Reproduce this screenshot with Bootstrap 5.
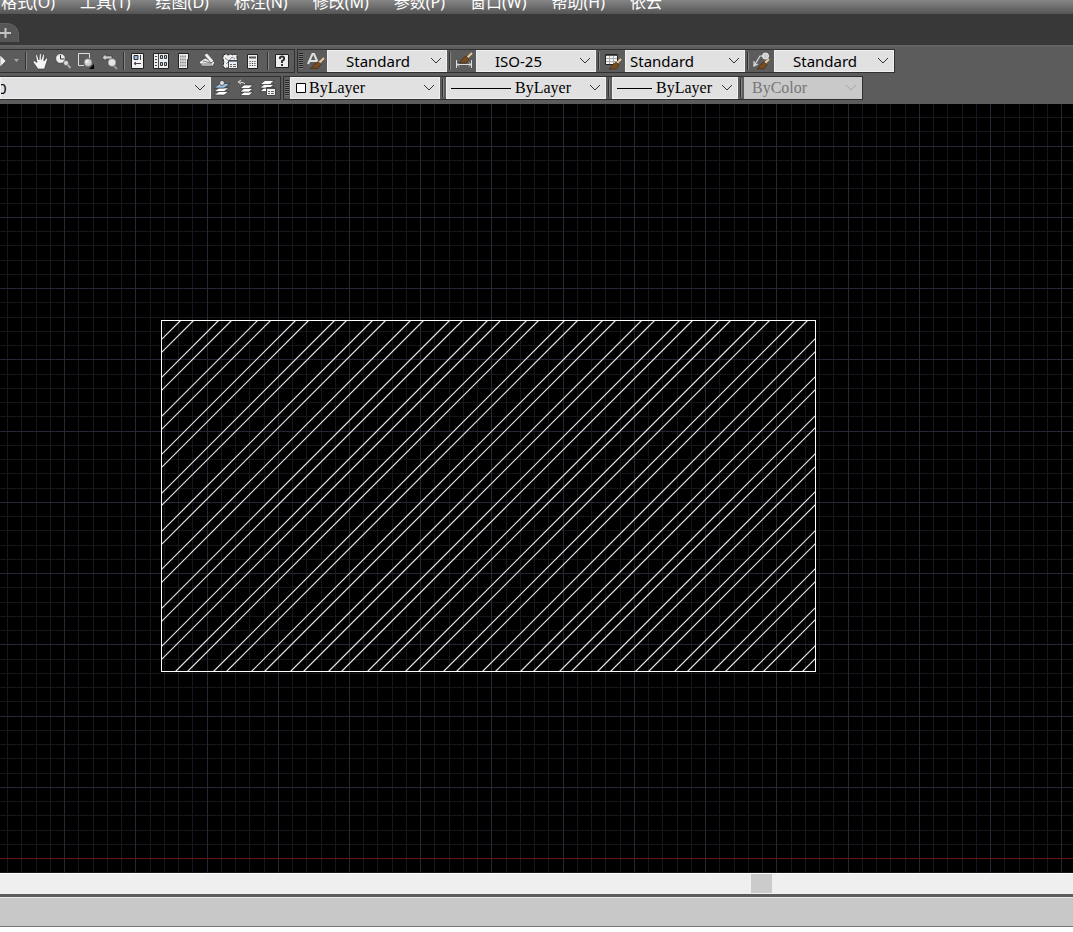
<!DOCTYPE html>
<html lang="zh-CN">
<head>
<meta charset="utf-8">
<meta name="viewport" content="width=device-width, initial-scale=1">
<title>CAD</title>
<link href="https://cdn.jsdelivr.net/npm/bootstrap@5.3.0/dist/css/bootstrap.min.css" rel="stylesheet">
<style>
  body { background: #fff; font-family: "Noto Sans", "Noto Sans CJK SC", sans-serif; }
  .menu-strip { height: 14px; gap: 25px; padding-left: 1px; background: linear-gradient(#868686, #545454); }
  .menu-strip a { color: #fff; font-size: 16px; line-height: 24px; white-space: nowrap; text-decoration: none; }
  .tab-strip { height: 31px; padding-top: 9px; background: #383838; }
  .new-tab { width: 19px; height: 19px; background: #565656; border: 1px solid #606060; border-width: 1px 1px 0 0; border-radius: 0 12px 0 0; }
  .tool-area { background: #5c5c5c; border-top: 2px solid #646464; padding: 2px 0 4px; gap: 3px; }
  .tool-row { gap: 2px; }
  .tool-group { height: 24px; border: 1px solid #303030; background: #5c5c5c; }
  .tool-group.cut { border-left: 0; }
  .tool-btn { width: 23px; height: 22px; padding: 0; border: 0; background: none; display: block; flex: none; }
  .tool-btn svg { display: block; }
  .w-cut { width: 10px; } .w-drop { width: 13px; }
  .split { width: 6px; flex: none; border: 2px solid #5c5c5c; background: linear-gradient(90deg, #303030 1px, #858585 1px); }
  .grip { width: 6px; flex: none; border: 2px solid #5c5c5c; border-width: 3px 1px 3px 1px; background: repeating-linear-gradient(#222 0 1px, #777 1px 2px); }
  .box { position: relative; flex: none; }
  .box select { display: block; width: 100%; height: 22px; padding: 0 20px 0 18px; appearance: none; border: 1px solid #f0f0f0; border-radius: 0; color: #000; line-height: 20px; font-size: 15px;
    background: #e1e1e1 url("data:image/svg+xml,%3Csvg xmlns='http://www.w3.org/2000/svg' width='12' height='8'%3E%3Cpath d='M1 1l5 5 5-5' fill='none' stroke='%23333'/%3E%3C/svg%3E") no-repeat right 4px top 6px; }
  .box select.near { padding-left: 4px; }
  .box select.serif { font: 16px/20px "Liberation Serif", serif; }
  .box select.color { padding-left: 18px; }
  .box select.linetype { padding-left: 68px; }
  .box select.weight { padding-left: 43px; }
  .box select.plot { padding-left: 7px; }
  .box select:disabled { background-color: #c9c9c9; border-color: #c9c9c9; color: #777; opacity: 1;
    background-image: url("data:image/svg+xml,%3Csvg xmlns='http://www.w3.org/2000/svg' width='12' height='8'%3E%3Cpath d='M1 1l5 5 5-5' fill='none' stroke='%23a4a4a4'/%3E%3C/svg%3E"); }
  .sample { position: absolute; left: 0; top: 0; pointer-events: none; }
  .w-118 { width: 118px; } .w-120 { width: 120px; } .w-126 { width: 126px; } .w-150 { width: 150px; } .w-160 { width: 160px; } .w-211 { width: 211px; }
  .box select.layer { padding-left: 0; text-indent: -3px; }
  .drawing { min-height: 400px; background: #000; position: relative; overflow: hidden; }
  .drawing svg { position: absolute; inset: 0; width: 100%; height: 100%; shape-rendering: crispEdges; }
  .drawing #hatch { shape-rendering: geometricPrecision; }
  .scroll-track { height: 21px; background: #efefef; border-top: 1px solid #fff; padding-bottom: 1px; }
  .scroll-lead { width: 70%; }
  .scroll-thumb { width: 21px; background: #cbcbcb; }
  .status { height: 33px; margin-bottom: 5px; background: #c8c8c8; border-top: 3px solid #5c5c5c; border-bottom: 1px solid #777; box-shadow: inset 0 1px #e8e8e8; }
</style>
</head>
<body>
<div class="d-flex flex-column min-vh-100">
  <nav class="menu-strip d-flex align-items-end overflow-hidden" aria-label="菜单">
    <a href="#">格式(O)</a><a href="#">工具(T)</a><a href="#">绘图(D)</a><a href="#">标注(N)</a><a href="#">修改(M)</a><a href="#">参数(P)</a><a href="#">窗口(W)</a><a href="#">帮助(H)</a><a href="#">依云</a>
  </nav>
  <div class="tab-strip">
    <button class="new-tab d-block p-0" type="button" aria-label="新建">
      <svg class="d-block" width="18" height="18" viewBox="0 0 18 18"><path d="M0 9h11M5.500 4v10" stroke="#c4c4c4" stroke-width="2"/></svg>
    </button>
  </div>

  <div class="tool-area d-flex flex-column">
    <div class="tool-row d-flex">
      <div class="tool-group cut d-flex">
        <button class="tool-btn w-cut" type="button" aria-label="特性匹配"><svg width="10" height="22"><path d="M0 5l6 6-6 6z" fill="#eee" stroke="#333" stroke-width=".5"/></svg></button>
        <button class="tool-btn w-drop" type="button" aria-label="更多"><svg width="13" height="22"><path d="M4 9h5l-2.500 3z" fill="#aaa"/></svg></button>
        <span class="split"></span>
        <button class="tool-btn" type="button" aria-label="平移"><svg width="23" height="22"><path d="M9 19L4 12l1-1.500 3 2L6.500 5l1.500-.5 2 5.500L10.500 3.500h1.800V9.500L14 4l1.500.5L14.800 11 17.500 8l1.200.8L17 14l-1.500 5z" fill="#f5f5f5" stroke="#333" stroke-width=".6"/></svg></button>
        <button class="tool-btn" type="button" aria-label="实时缩放"><svg width="23" height="22"><path d="M14 13l4.500 5" stroke="#aaa" stroke-width="2"/><circle cx="8.500" cy="8.500" r="4.800" fill="#eee" stroke="#333" stroke-width=".6"/><path d="M8.500 5v4h4" fill="none" stroke="#333"/><circle cx="14" cy="13" r="2.500" fill="#ddd" stroke="#444" stroke-width=".5"/></svg></button>
        <button class="tool-btn" type="button" aria-label="窗口缩放"><svg width="23" height="22"><path d="M9 15.500H3.500v-12h11V8" fill="none" stroke="#ddd"/><path d="M19 14v5h-5z" fill="#000"/><circle cx="13" cy="12.500" r="4" fill="#ccc" stroke="#555" stroke-width=".5"/><circle cx="12" cy="11.500" r="1.800" fill="#eee"/></svg></button>
        <button class="tool-btn" type="button" aria-label="缩放上一个"><svg width="23" height="22"><path d="M4 7.500L8 4v2h6v3H8v2z" fill="#ccc" stroke="#333" stroke-width=".6"/><path d="M14 14l5 5" stroke="#999" stroke-width="2"/><circle cx="14" cy="12.500" r="4" fill="#e5e5e5" stroke="#555" stroke-width=".6"/></svg></button>
        <span class="split"></span>
        <button class="tool-btn" type="button" aria-label="特性"><svg width="23" height="22"><path d="M4.500 3.500h12v15h-12z" fill="#f2f2f2" stroke="#222"/><path d="M7 5.500h4v4h-4z" fill="#91bde5" stroke="#333"/><path d="M13.500 5v5M7 13.500h7M9 12l-2 1.500L9 15" stroke="#444" fill="none"/></svg></button>
        <button class="tool-btn" type="button" aria-label="设计中心"><svg width="23" height="22"><path d="M3.500 3.500h15v15h-15z" fill="#eee" stroke="#222"/><path d="M8.500 4v14M5 6.500h2M5 9.500h2M5 12.500h2M5 15.500h2" stroke="#444"/><path d="M10.500 5.500h2v3h-2zM14.500 5.500h2v3h-2zM10.500 12.500h2v3h-2zM14.500 12.500h2v3h-2z" fill="#b9cede" stroke="#333"/></svg></button>
        <button class="tool-btn" type="button" aria-label="工具选项板"><svg width="23" height="22"><path d="M5.500 3.500h10v6H14.500v9h-9z" fill="#eee" stroke="#222"/><path d="M7 6.500h6M7 9.500h6M7 12.500h6M7 15.500h6" stroke="#888" stroke-width="2" stroke-dasharray="1.500 .7"/></svg></button>
        <button class="tool-btn" type="button" aria-label="图纸集"><svg width="23" height="22"><path d="M3 12l6-4 10 4-2 4H6z" fill="#e8e8e8" stroke="#333" stroke-width=".7"/><path d="M5 14h11M7 11l8 2" stroke="#777"/><path d="M8 5l3-2 7 8-3 2z" fill="#eee" stroke="#444" stroke-width=".7"/></svg></button>
        <button class="tool-btn" type="button" aria-label="标记集"><svg width="23" height="22"><path d="M4 5l3-1 2 1 3-1 2 1 3-1 1 2v12H5l-1-3 1-3-1-3z" fill="#eee" stroke="#222" stroke-dasharray="3 1"/><path d="M6 8l4 3 3-4 3 2M7 14l3-3" fill="none" stroke="#888"/><path d="M9.500 10.500h9v8h-9z" fill="#eee" stroke="#444"/><path d="M10 11.500h8" stroke="#6d87a0"/><path d="M11 14.500h2M14 14.500h3M11 16.500h2M14 16.500h3" stroke="#666"/></svg></button>
        <button class="tool-btn" type="button" aria-label="快速计算器"><svg width="23" height="22"><path d="M5.500 4.500h10v14h-10z" fill="#eee" stroke="#222"/><path d="M7 7.500h7" stroke="#555" stroke-width="2"/><path d="M7.500 11.500h6M7.500 13.500h6M7.500 15.500h6" stroke="#444" stroke-dasharray="1.200 1.200"/></svg></button>
        <span class="split"></span>
        <button class="tool-btn" type="button" aria-label="帮助"><svg width="23" height="22"><path d="M4.500 4.500h13v13h-13z" fill="#eee" stroke="#222"/><path d="M9 9V7.500Q11 5.500 13 7.500V9.500L11 11v2M11 14v2" fill="none" stroke="#333" stroke-width="2"/></svg></button>
      </div>

      <div class="tool-group d-flex">
        <span class="grip"></span>
        <button class="tool-btn" type="button" aria-label="文字样式"><svg width="23" height="22"><path d="M4 14L8.500 4h1.500l4 9M6 11h7" fill="none" stroke="#e0e0e0" stroke-width="2"/><path d="M15 13l5-5" stroke="#f1c995" stroke-width="2"/><path d="M14 11.500l3 3-3 4H6q4-1 4-4z" fill="#7a4a20" stroke="#3a2818" stroke-width=".6"/></svg></button>
        <div class="box w-120"><select aria-label="文字样式"><option>Standard</option></select></div>
        <span class="split"></span>
        <button class="tool-btn" type="button" aria-label="标注样式"><svg width="23" height="22"><path d="M3.500 10v8M18.500 10v8M4 14.500h14M6 12.500l-2 2 2 2M16 12.500l2 2-2 2" fill="none" stroke="#ddd"/><path d="M14 8l5-5" stroke="#f1c995" stroke-width="2"/><path d="M13 6l3 3-3 4H5q4-1 4-4z" fill="#7a4a20" stroke="#3a2818" stroke-width=".6"/></svg></button>
        <div class="box w-120"><select aria-label="标注样式"><option>ISO-25</option></select></div>
        <span class="split"></span>
        <button class="tool-btn" type="button" aria-label="表格样式"><svg width="23" height="22"><path d="M3.500 4.500h12v10h-12z" fill="#f2f2f2" stroke="#222"/><path d="M4 5.500h11" stroke="#555"/><path d="M4 8.500h11M4 11.500h11M7.500 6v8M11.500 6v8" stroke="#aaa"/><path d="M15 13l4-4" stroke="#f1c995" stroke-width="2"/><path d="M14 12l3 3-3 4H7q3-1 3-4z" fill="#7a4a20" stroke="#3a2818" stroke-width=".6"/></svg></button>
        <div class="box w-120"><select class="near" aria-label="表格样式"><option>Standard</option></select></div>
        <span class="split"></span>
        <button class="tool-btn" type="button" aria-label="多重引线样式"><svg width="23" height="22"><path d="M12 6H9L3 16M3 11v5l4-2" fill="none" stroke="#ddd" stroke-width="1.200"/><circle cx="14.500" cy="6" r="3" fill="#ccc" stroke="#eee"/><path d="M14 13l4-4" stroke="#f1c995" stroke-width="2"/><path d="M13 12l3 3-3 4H6q3-1 3-4z" fill="#7a4a20" stroke="#3a2818" stroke-width=".6"/></svg></button>
        <div class="box w-120"><select aria-label="多重引线样式"><option>Standard</option></select></div>
      </div>
    </div>

    <div class="tool-row d-flex">
      <div class="tool-group cut d-flex">
        <div class="box w-211"><select class="layer" aria-label="图层"><option>0</option></select></div>
        <button class="tool-btn" type="button" aria-label="将对象的图层置为当前"><svg width="23" height="22"><g stroke="#222" stroke-width=".6"><path d="M3 18l5-3.500h10l-5 3.500z" fill="#fff"/><path d="M3 14.500l5-3.500h10l-5 3.500z" fill="#fff"/><path d="M3 11l6-4.500h10l-6 4.500z" fill="#9cc3e6"/><circle cx="11" cy="6" r="2.500" fill="#ddd"/></g></svg></button>
        <button class="tool-btn" type="button" aria-label="上一个图层"><svg width="23" height="22"><g stroke="#222" stroke-width=".6" fill="#fff"><path d="M6 18.500l4-3.500h9l-4 3.500z"/><path d="M6 15l4-3.500h9l-4 3.500z"/><path d="M6 11.500l4-3.500h9l-4 3.500z"/></g><path d="M11 7q-1-2-6-2M7 3L4 5l3 2" fill="none" stroke="#ddd"/></svg></button>
        <button class="tool-btn" type="button" aria-label="图层状态管理器"><svg width="23" height="22"><g stroke="#222" stroke-width=".6" fill="#fff"><path d="M3 14.500l4-3.500h10l-4 3.500z"/><path d="M3 11l4-3.500h10l-4 3.500z"/><path d="M3 7.500l5-4h9l-4 4z"/></g><path d="M9.500 10.500h9v8h-9z" fill="#eee" stroke="#444"/><path d="M10 11.500h8" stroke="#555"/><path d="M11 14.500h2M14 14.500h3M11 16.500h2M14 16.500h3" stroke="#666"/></svg></button>
      </div>

      <div class="tool-group d-flex">
        <span class="grip"></span>
        <div class="box w-150"><select class="serif color" aria-label="颜色"><option>ByLayer</option></select><svg class="sample" width="18" height="22"><path d="M6.500 6.500h9v9h-9z" fill="#fff" stroke="#000"/></svg></div>
        <span class="split"></span>
        <div class="box w-160"><select class="serif linetype" aria-label="线型"><option>ByLayer</option></select><svg class="sample" width="66" height="22"><path d="M5 11.500h60" stroke="#000"/></svg></div>
        <span class="split"></span>
        <div class="box w-126"><select class="serif weight" aria-label="线宽"><option>ByLayer</option></select><svg class="sample" width="41" height="22"><path d="M5 11.500h35" stroke="#000"/></svg></div>
        <span class="split"></span>
        <div class="box w-118"><select class="serif plot" aria-label="打印样式" disabled><option>ByColor</option></select></div>
      </div>
    </div>
  </div>

  <main class="drawing flex-grow-1">
    <svg role="img" aria-label="图案填充的矩形">
      <defs><clipPath id="plate"><rect x="161" y="216" width="655" height="352"/></clipPath></defs>
      <path id="minor" stroke="#17171b" fill="none"/>
      <path id="major" stroke="#262635" fill="none"/>
      <path d="M0 754.500h4000" stroke="#6b1414"/>
      <path id="hatch" clip-path="url(#plate)" stroke="#e6e6e6" stroke-width="1.200" fill="none"/>
      <rect x="161.500" y="216.500" width="654" height="351" fill="none" stroke="#fff"/>
    </svg>
  </main>

  <div class="scroll-track d-flex"><div class="scroll-lead"></div><div class="scroll-thumb"></div></div>
  <footer class="status"></footer>
</div>
<script>
  // Grid: every fifth line is a major one, counted from the origin line
  const step = 14.249, paths = { minor: '', major: '' };
  for (let k = -4; k < 200; k++) {
    const x = Math.round(64.02 + k * step) + 0.5;
    paths[k % 5 ? 'minor' : 'major'] += `M${x} 0V3000`;
  }
  for (let k = -60; k < 150; k++) {
    if (!k) continue;
    const y = Math.round(754 + k * step) + 0.5;
    paths[k % 5 ? 'minor' : 'major'] += `M0 ${y}H4000`;
  }
  for (const id in paths) document.getElementById(id).setAttribute('d', paths[id]);

  // Hatch: pairs of 45 degree lines
  let hatch = '';
  for (let k = 0; k < 26; k++)
    for (const gap of [0, 12.8]) {
      const x = Math.round(181 + k * 38.4 + gap);
      hatch += `M${x} 216l-352 352`;
    }
  document.getElementById('hatch').setAttribute('d', hatch);
</script>
<script src="https://cdn.jsdelivr.net/npm/bootstrap@5.3.0/dist/js/bootstrap.bundle.min.js"></script>
</body>
</html>
